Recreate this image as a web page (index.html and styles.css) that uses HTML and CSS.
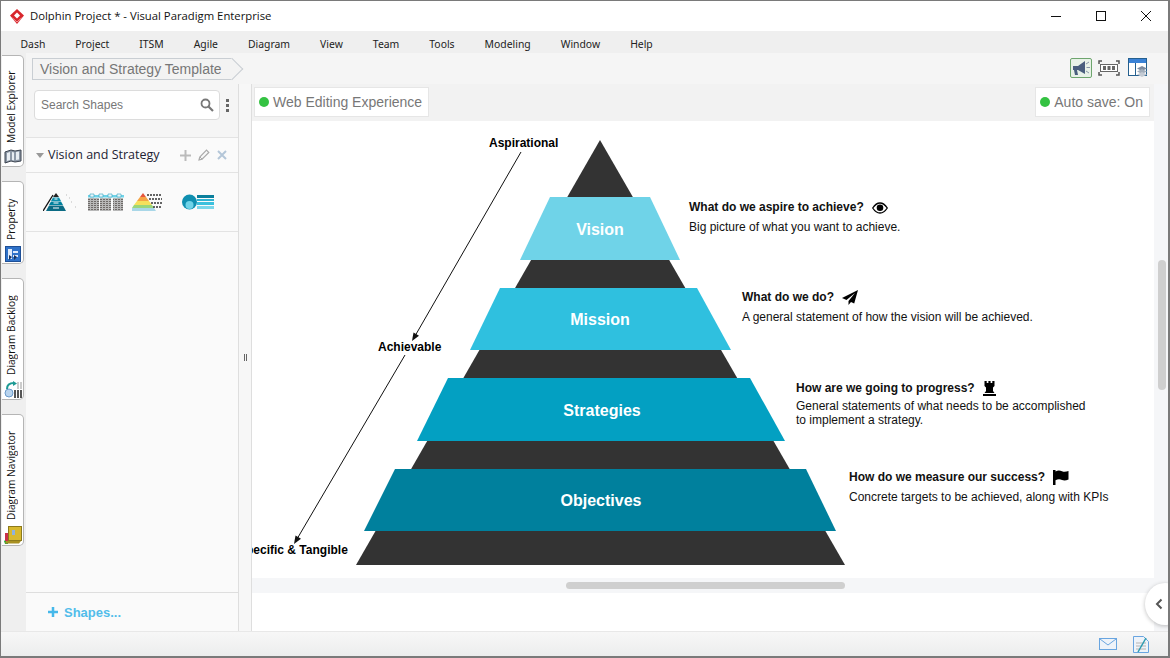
FILE: index.html
```html
<!DOCTYPE html>
<html lang="en">
<head>
<meta charset="utf-8">
<title>Dolphin Project * - Visual Paradigm Enterprise</title>
<link rel="stylesheet" href="styles.css">
</head>
<body>
<div class="window">
  <header class="titlebar">
    <svg class="logo" viewBox="0 0 14 15" width="14" height="15"><path d="M7 0l7 6.500L7 15 0 6.500z" fill="#d8262c"/><path d="M4 6.500L7 3.500l3 3-3 3z" fill="#fff"/><path d="M2.500 9L7 13l4.500-4" stroke="#f6b4b4" stroke-width=".8" fill="none"/></svg>
    <span class="title">Dolphin Project * - Visual Paradigm Enterprise</span>
    <div class="winctl">
      <svg width="12" height="12" viewBox="0 0 12 12"><path d="M1 6.500h10" stroke="#111"/></svg>
      <svg width="12" height="12" viewBox="0 0 12 12"><rect x="1.500" y="1.500" width="9" height="9" fill="none" stroke="#111"/></svg>
      <svg width="12" height="12" viewBox="0 0 12 12"><path d="M1 1l10 10M11 1L1 11" stroke="#111"/></svg>
    </div>
  </header>
  <nav class="menubar">
    <span>Dash</span><span>Project</span><span>ITSM</span><span>Agile</span><span>Diagram</span><span>View</span><span>Team</span><span>Tools</span><span>Modeling</span><span>Window</span><span>Help</span>
  </nav>
  <div class="body">
    <aside class="rail">
      <div class="tab tab-model"><span class="tab-text">Model Explorer</span>
        <svg class="tab-icon" viewBox="0 0 18 16" width="18" height="16"><path d="M1 3l6-2 4 1 6-1v11l-6 1-4-1-6 2z" fill="#8d98a6" stroke="#3c4450"/><path d="M3 4l3-1v8l-3 1zM8 3l2 .5v8L8 11zM12 3l3-.5v8l-3 .5z" fill="#e8edf2"/></svg></div>
      <div class="tab tab-prop"><span class="tab-text">Property</span>
        <svg class="tab-icon" viewBox="0 0 16 16" width="16" height="16"><rect x=".5" y=".5" width="15" height="15" fill="#2f72c9" stroke="#1e4f96"/><rect x="3" y="3" width="4" height="10" fill="#dfeafa"/><path d="M8 5h5v2H8zM8 9h5v2H8z" fill="#dfeafa"/><path d="M4 9l3 2-3 3zM9 9l3 2-3 3z" fill="#17335f"/></svg></div>
      <div class="tab tab-backlog"><span class="tab-text">Diagram Backlog</span>
        <svg class="tab-icon" viewBox="0 0 18 17" width="18" height="17"><circle cx="5" cy="12" r="4" fill="#b9d4ee" stroke="#6b9bcb"/><path d="M3 8c0-5 3-6 7-6" stroke="#1d9a94" stroke-width="2" fill="none"/><path d="M9 0l4 2.500L9 5z" fill="#1d9a94"/><path d="M10 9h2v8h-2zM13 9h2v8h-2zM16 9h2v8h-2z" fill="#555"/><path d="M13 1h2v7h-2zM16 1h2v7h-2z" fill="#ccc"/></svg></div>
      <div class="tab tab-nav"><span class="tab-text">Diagram Navigator</span>
        <svg class="tab-icon" viewBox="0 0 18 18" width="18" height="18"><path d="M0 15l4-3v6H1z" fill="#1ea83c"/><path d="M1 7h5v8H1z" fill="#c9304b"/><rect x="4.500" y=".5" width="13" height="14" fill="#d8b92e" stroke="#8c7a1c"/><rect x="8" y="4" width="3" height="5" fill="#8eb2dc"/><path d="M2 15h15l-2 2.500H1z" fill="#a89022"/></svg></div>
    </aside>
    <div class="workspace">
      <div class="crumbbar">
        <div class="crumb">Vision and Strategy Template</div>
        <div class="tools">
          <span class="tool tool-on"><svg viewBox="0 0 20 18" width="20" height="18"><path d="M2 7h5l7-5v13L7 11H6l1 5H4l-1-5H2z" fill="#4a5f7e"/><path d="M15 5l3-2M15.500 8.500H19M15 12l3 2" stroke="#8a97a8"/></svg></span>
          <span class="tool"><svg viewBox="0 0 22 16" width="22" height="16"><path d="M1 4V1h3M18 1h3v3M21 12v3h-3M4 15H1v-3" stroke="#555" stroke-width="1.500" fill="none"/><rect x="2.500" y="4.500" width="17" height="7" fill="#fff" stroke="#666"/><path d="M5 6h3v4H5zM9.500 6h3v4h-3zM14 6h3v4h-3z" fill="#666"/></svg></span>
          <span class="tool"><svg viewBox="0 0 20 20" width="20" height="20"><rect x=".5" y=".5" width="18" height="17" fill="#fff" stroke="#25608f"/><rect x="1" y="1" width="17" height="4" fill="#3b82d6"/><path d="M7.500 5v13" stroke="#25608f"/><path d="M14 8l5 2.500-5 2.500-5-2.500z" fill="#7d8ba0"/><path d="M14 11l5 2.500-5 2.500-5-2.500z" fill="#a3aebb"/><path d="M14 14l5 2.500-5 2.500-5-2.500z" fill="#c3cad3"/></svg></span>
        </div>
      </div>
      <div class="panes">
        <section class="palette">
          <div class="searchrow">
            <div class="search"><span>Search Shapes</span>
              <svg viewBox="0 0 14 14" width="14" height="14"><circle cx="5.500" cy="5.500" r="4" fill="none" stroke="#777" stroke-width="1.800"/><path d="M8.500 8.500L13 13" stroke="#777" stroke-width="2.200"/></svg>
            </div>
            <div class="kebab"><i></i><i></i><i></i></div>
          </div>
          <div class="group">
            <span class="caret"></span><span class="group-name">Vision and Strategy</span>
            <div class="group-acts">
              <svg viewBox="0 0 11 11" width="11" height="11"><path d="M5.500 0v11M0 5.500h11" stroke="#bbb" stroke-width="2"/></svg>
              <svg viewBox="0 0 12 12" width="12" height="12"><path d="M1 11l.8-3L8.500 1.200l2.300 2.300L4 10.200z" fill="none" stroke="#aaa" stroke-width="1.200"/><path d="M2 8l2.200 2.200" stroke="#aaa"/></svg>
              <svg viewBox="0 0 10 10" width="10" height="10"><path d="M1 1l8 8M9 1L1 9" stroke="#b4c6d8" stroke-width="2"/></svg>
            </div>
          </div>
          <div class="thumbs">
            <svg class="thumb thumb-a" viewBox="0 0 33 18" width="33" height="18"><path d="M0 18L10 2" stroke="#111" stroke-width="1.300"/><path d="M13 0l3 4h-6z" fill="#222"/><path d="M10 4.500h6l2 3.500H8z" fill="#0e90ad"/><path d="M8 8.500h10l2 3.500H6z" fill="#00809d"/><path d="M6 12.500h14l3 5.500H3z" fill="#0b6b84"/><path d="M11.500 6h3M10.500 10h5M10 15h6" stroke="#fff"/><path d="M23 2h1M26 5h1M28 9h1M32 14h1" stroke="#bbb"/></svg>
            <svg class="thumb thumb-b" viewBox="0 0 36 18" width="36" height="18"><defs><pattern id="noise" width="3" height="2" patternUnits="userSpaceOnUse"><rect width="3" height="2" fill="#b8b8b8"/><rect width="2" height="1" fill="#6e6a68"/></pattern></defs><path d="M0 2h36v2.500H0z" fill="#6fd3e8"/><path d="M2 1h4v3H2zM11 1h4v3h-4zM20 1h4v3h-4zM29 1h4v3h-4z" fill="#e8f7fb" stroke="#2fa3c0" stroke-width=".6"/><rect y="5" width="11" height="13" fill="url(#noise)"/><rect x="12" y="5" width="11" height="13" fill="url(#noise)"/><rect x="25" y="5" width="10" height="13" fill="url(#noise)"/></svg>
            <svg class="thumb thumb-c" viewBox="0 0 30 18" width="30" height="18"><path d="M11 0l3 4H8z" fill="#e6563c"/><path d="M8 4h6l3 4H5z" fill="#f5a344"/><path d="M5 8h12l3 4H2z" fill="#f6e05c"/><path d="M2 12h18l2 3H0z" fill="#9ad67c"/><path d="M0 15h22l2 3H0z" fill="#a9d7e8"/><path d="M15 2h15M17 6h13M19 10h11M21 14h9" stroke="#333" stroke-width="1.500" stroke-dasharray="2 1"/></svg>
            <svg class="thumb thumb-d" viewBox="0 0 32 16" width="32" height="16"><circle cx="7.500" cy="8" r="7.500" fill="#0f8fb0"/><circle cx="7.500" cy="11" r="4" fill="#6fd3e8"/><path d="M15 1h17v3H15z" fill="#0b7f9c"/><path d="M15 5h17v2H15z" fill="#2fb3d1"/><path d="M15 8h17v3H15z" fill="#3cc0dd"/><path d="M15 12h17v3H15z" fill="#7ad6ea"/></svg>
          </div>
          <div class="spacer"></div>
          <div class="addshapes"><svg viewBox="0 0 10 10" width="10" height="10"><path d="M5 0v10M0 5h10" stroke="#45b8ea" stroke-width="2.500"/></svg><span>Shapes...</span></div>
        </section>
        <div class="splitter"><i></i></div>
        <section class="editor">
          <div class="editor-head">
            <div class="chip"><i class="dot"></i>Web Editing Experience</div>
            <div class="chip"><i class="dot"></i>Auto save: On</div>
          </div>
          <div class="editor-main">
            <div class="canvas">
              <svg class="diagram" viewBox="252 121 901 457" width="901" height="457">
                <path d="M600 140L845 565H356z" fill="#333"/>
                <path d="M550 197H650L680 260H520z" fill="#6fd3e8"/>
                <path d="M500 288H697L731 350H470z" fill="#2fc0df"/>
                <path d="M448 378H750L785 441H417z" fill="#03a0c2"/>
                <path d="M395 469H806L836 531H364z" fill="#00809d"/>
                <text class="band" x="600" y="235">Vision</text>
                <text class="band" x="600" y="325">Mission</text>
                <text class="band" x="602" y="416">Strategies</text>
                <text class="band" x="601" y="506">Objectives</text>
                <path d="M521 152L415 336" stroke="#111" fill="none"/>
                <path d="M412 341l1.500-8.500 5.500 3.200z" fill="#111"/>
                <path d="M405 355L297 539" stroke="#111" fill="none"/>
                <path d="M294 544l1.500-8.500 5.500 3.200z" fill="#111"/>
                <text class="tag" x="489" y="147">Aspirational</text>
                <text class="tag" x="378" y="351">Achievable</text>
                <text class="tag" x="238" y="554">Specific &amp; Tangible</text>
              </svg>
              <div class="note note-vision"><h4>What do we aspire to achieve?<svg viewBox="0 0 16 12" width="16" height="12"><path d="M.7 6C3 2.500 5.500 1 8 1s5 1.500 7.300 5C13 9.500 10.500 11 8 11S3 9.500.7 6z" fill="none" stroke="#000" stroke-width="1.300"/><circle cx="8" cy="5.800" r="3.300"/></svg></h4><p>Big picture of what you want to achieve.</p></div>
              <div class="note note-mission"><h4>What do we do?<svg viewBox="0 0 16 15" width="16" height="15"><path d="M16 0L0 8l4.500 2L13 3 6.500 11v4l2.500-3 3.200 1.500z"/></svg></h4><p>A general statement of how the vision will be achieved.</p></div>
              <div class="note note-strategy"><h4>How are we going to progress?<svg viewBox="0 0 13 15" width="13" height="15"><path d="M1.500 0h2.200v2h1.700V0h2.200v2h1.700V0h2.200v5L10 6.500V10l1.500 2h-10L3 10V6.500L1.500 5zM0 13h13v2H0z"/></svg></h4><p>General statements of what needs to be accomplished<br>to implement a strategy.</p></div>
              <div class="note note-objective"><h4>How do we measure our success?<svg viewBox="0 0 16 15" width="16" height="15"><path d="M0 0h2.500v15H0zM2.500 1.500C5 .2 7 .5 9 1.300s4 .6 6.500-.3v8.500C13 10.500 11 10.800 9 10S5 9 2.500 10.300z"/></svg></h4><p>Concrete targets to be achieved, along with KPIs</p></div>
            </div>
            <div class="hscroll"><i></i></div>
            <div class="below"></div>
            <button class="collapse" aria-label="Collapse"><svg viewBox="0 0 8 12" width="8" height="12"><path d="M6.500 1.500L2 6l4.500 4.500" fill="none" stroke="#555" stroke-width="2"/></svg></button>
          </div>
        </section>
        <div class="vscroll"><i></i></div>
      </div>
    </div>
  </div>
  <footer class="statusbar">
    <svg viewBox="0 0 18 12" width="18" height="12"><rect x=".5" y=".5" width="17" height="11" fill="#eef3f9" stroke="#69a5e0"/><path d="M1 1l8 6 8-6" fill="none" stroke="#69a5e0"/></svg>
    <svg viewBox="0 0 16 17" width="16" height="17"><path d="M.5.500h10l5 5v11H.5z" fill="#eef3f9" stroke="#69a5e0"/><path d="M3 7h10M3 10h10M3 13h10" stroke="#c9c9c9" stroke-width="1.500"/><path d="M5 16L13 2" stroke="#2b9bb0" stroke-width="1.500"/></svg>
  </footer>
</div>
</body>
</html>
```
FILE: styles.css
```css
* { box-sizing: border-box; }
html, body { margin: 0; padding: 0; }
body { width: 1170px; height: 658px; overflow: hidden; font-family: "Liberation Sans", Arial, sans-serif; }
.window { width: 1170px; height: 658px; display: flex; flex-direction: column; overflow: hidden; border: 1px solid #7a7a7a; border-width: 1px 2px 2px 1px; background: #f0f0f0; }

.titlebar { height: 30px; flex: none; display: flex; align-items: center; background: #fff; padding-left: 9px; }
.logo { flex: none; margin-right: 6px; }
.title { font: 11.300px "Open Sans", sans-serif; color: #111; margin-top: -2px; }
.winctl { margin-left: auto; display: flex; gap: 33px; padding-right: 16px; }

.menubar { height: 22px; flex: none; display: flex; align-items: center; gap: 30px; padding: 4px 0 0 19.500px; background: #efefef; font: 10.400px "Noto Sans", sans-serif; color: #222; }

.body { flex: 1; min-height: 0; display: flex; }
.rail { width: 25px; flex: none; display: flex; flex-direction: column; gap: 14px; padding: 2px 0 0 1px; background: #efefef; }
.tab { width: 22px; flex: none; display: flex; flex-direction: column; align-items: center; background: #fff; border: 1px solid #b5b5b5; border-left: 0; border-radius: 0 5px 5px 0; padding: 2px 0 1px; }
.tab-model { height: 112px; }
.tab-prop { height: 83px; }
.tab-backlog { height: 122px; }
.tab-nav { height: 132px; }
.tab-text { writing-mode: vertical-rl; transform: rotate(180deg); font: 10.200px "Open Sans", sans-serif; color: #111; flex: 1; margin: 0 4px 6px 0; white-space: nowrap; }
.tab-icon { flex: none; }

.workspace { flex: 1; min-width: 0; display: flex; flex-direction: column; }
.crumbbar { height: 31px; flex: none; display: flex; align-items: flex-start; justify-content: space-between; padding: 5px 18px 0 6px; background: #f5f5f5; }
.crumb { position: relative; height: 22px; width: 200px; line-height: 21px; padding-left: 7px; font-size: 14px; color: #777; white-space: nowrap; background: #f3f3f3; border: 1px solid #c9ced3; border-right: 0; }
.crumb::after { content: ""; position: absolute; top: 2px; right: -8px; width: 15px; height: 15px; background: #f3f3f3; border: 1px solid #c9ced3; border-width: 1px 1px 0 0; transform: rotate(45deg); }
.tools { display: flex; gap: 5px; align-items: center; margin-top: -1px; }
.tool { width: 24px; height: 22px; display: flex; align-items: center; justify-content: center; }
.tool-on { width: 22px; height: 20px; background: #e8f2e8; border: 1px solid #6ea56e; border-radius: 2px; }

.panes { flex: 1; min-height: 0; display: flex; }
.palette { width: 213px; flex: none; display: flex; flex-direction: column; background: #fafafa; border-right: 1px solid #dedede; }
.searchrow { height: 54px; flex: none; display: flex; align-items: flex-start; padding: 6px 0 0 8px; border-bottom: 1px solid #e3e3e3; background: #f5f5f5; }
.search { width: 186px; height: 30px; display: flex; align-items: center; justify-content: space-between; padding: 0 5px 0 6px; background: #fff; border: 1px solid #dcdcdc; border-radius: 4px; font-size: 12px; color: #777; }
.kebab { width: 15px; height: 30px; display: flex; flex-direction: column; align-items: center; justify-content: center; gap: 2px; }
.kebab i { width: 3px; height: 3px; background: #666; }
.group { height: 35px; flex: none; display: flex; align-items: center; padding: 0 11px 0 10px; border-bottom: 1px solid #e3e3e3; }
.caret { width: 0; height: 0; border: 4px solid transparent; border-top: 5px solid #999; border-bottom: 0; margin-right: 4px; }
.group-name { font: 12.500px "Open Sans", sans-serif; color: #223; margin-top: -2px; }
.group-acts { margin-left: auto; display: flex; align-items: center; gap: 7px; }
.thumbs { height: 59px; flex: none; display: flex; align-items: center; padding: 0 0 0 17px; border-bottom: 1px solid #e3e3e3; }
.thumb-b { margin-left: 12px; }
.thumb-c { margin-left: 8px; }
.thumb-d { margin-left: 20px; }
.spacer { flex: 1; }
.addshapes { height: 39px; flex: none; display: flex; align-items: center; gap: 6px; padding-left: 22px; border-top: 1px solid #dedede; color: #52bdea; font-size: 13px; font-weight: 700; }

.splitter { width: 13px; flex: none; display: flex; align-items: center; justify-content: center; background: #f7f7f7; border-right: 1px solid #dedede; }
.splitter i { width: 3px; height: 7px; border-left: 1px solid #666; border-right: 1px solid #666; }

.editor { flex: 1; min-width: 0; display: flex; flex-direction: column; background: #fff; }
.editor-head { height: 37px; flex: none; display: flex; justify-content: space-between; align-items: flex-start; padding: 3px 4px 0 2px; background: #f2f2f2; }
.chip { height: 30px; display: flex; align-items: center; gap: 4px; padding: 0 6px 0 4px; background: #fff; border: 1px solid #e6e6e6; font-size: 14px; color: #777; }
.dot { width: 10px; height: 10px; border-radius: 50%; background: #34c242; }

.editor-main { flex: 1; min-height: 0; position: relative; display: flex; flex-direction: column; }
.canvas { position: relative; height: 457px; flex: none; overflow: hidden; background: #fff; }
.diagram { display: block; }
.band { font: 700 16px "Liberation Sans", sans-serif; fill: #fff; text-anchor: middle; }
.tag { font: 700 12px "Liberation Sans", sans-serif; fill: #000; }
.note { position: absolute; font-size: 12px; color: #111; }
.note h4 { margin: 0; display: flex; align-items: center; gap: 8px; font-size: 12px; font-weight: 700; line-height: 15px; white-space: nowrap; }
.note p { margin: 5px 0 0; line-height: 14px; white-space: nowrap; }
.note-vision { left: 437px; top: 79px; }
.note-mission { left: 490px; top: 169px; }
.note-strategy { left: 544px; top: 260px; }
.note-strategy p { margin-top: 3px; }
.note-objective { left: 597px; top: 349px; }
.hscroll { height: 15px; flex: none; background: #f5f6f8; display: flex; align-items: center; }
.hscroll i { width: 279px; height: 7px; margin-left: 314px; background: #cfcfcf; border-radius: 4px; }
.below { flex: 1; background: #fff; }
.collapse { position: absolute; z-index: 2; right: -31px; top: 462px; width: 40px; height: 42px; padding: 0 0 0 10px; border: 0; border-radius: 50%; background: #fff; box-shadow: 0 1px 4px rgba(0,0,0,.25); display: flex; align-items: center; text-align: left; }

.vscroll { width: 14px; flex: none; background: #f5f6f8; }
.vscroll i { display: block; width: 8px; height: 130px; margin: 176px 0 0 4px; background: #cfcfcf; border-radius: 4px; }

.statusbar { height: 25px; flex: none; display: flex; align-items: center; justify-content: flex-end; gap: 16px; padding-right: 19px; background: linear-gradient(#f7f7f7, #eceded); border-top: 1px solid #e8e8e8; }
```
